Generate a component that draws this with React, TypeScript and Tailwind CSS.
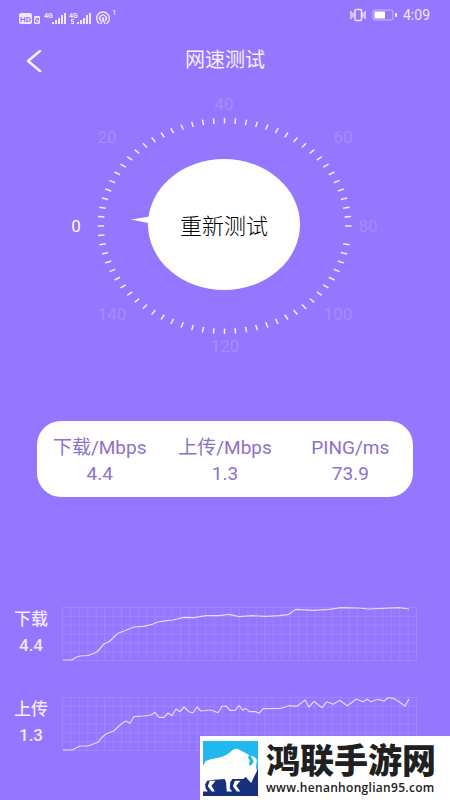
const TICKS = 72;
const MISSING_TICK = 37;

const dialLabels = [
  { text: '0', x: 11, y: 142, active: true },
  { text: '20', x: 42, y: 53 },
  { text: '40', x: 159, y: 20 },
  { text: '60', x: 278, y: 53 },
  { text: '80', x: 303, y: 142 },
  { text: '100', x: 273, y: 230 },
  { text: '120', x: 160, y: 262 },
  { text: '140', x: 47, y: 230 },
];

const results = [
  { label: '下载/Mbps', value: '4.4' },
  { label: '上传/Mbps', value: '1.3' },
  { label: 'PING/ms', value: '73.9' },
];

const charts = [
  {
    name: '下载',
    value: '4.4',
    points:
      '0,53 9,53 13,50.3 17,49 25,48.5 29,47 34,45 41,37 44,35.5 46,34.7 51,30 55,26.3 63,23.3 71,20 81,19.3 88,17.7 95,15 105,13.3 110,13 121,10.3 131,10.7 143,8.7 156,8.7 166,7.3 176,9.7 190,8.7 203,9.3 216,8.7 225,7.7 233,2.3 250,3.3 266,2.3 278,.7 295,1 306,2 336,.7 346,2',
  },
  {
    name: '上传',
    value: '1.3',
    points:
      '0,53 9,53 17,49 25,49 35,45.3 38,41.3 43,37 51,33.7 59,26.3 63,24 67,26.3 71,19.7 81,19 88,18 92,15.3 96,20.3 101,20.3 105,16 109,18.7 113,12 117,14.7 121,10 126,14.7 130,16 134,10 138,14 148,13 155,15.7 159,9.3 163,9 167,13.3 172,13.3 176,8.7 180,13.3 182,11.3 187,14.7 193,14.7 196,16.3 200,11.7 218,11.3 226,8.7 234,9.3 242,3 246,10 251,4.3 259,10.7 264,4.7 270,7.3 277,3.3 284,8.7 288,6.3 293,2 300,4.7 304,2.3 308,4.7 315,2.3 321,4 325,.7 330,1.3 336,4.7 342,9 346,2',
  },
];

function SignalIcons() {
  return (
    <svg width="104" height="24" viewBox="0 0 104 24" fill="#efe6ff" fontFamily="Roboto, sans-serif" aria-hidden="true">
      <rect x="2" y="10" width="13" height="11" rx="2" />
      <text x="8.500" y="18.500" fontSize="8" fontWeight="700" fill="#9576ff" textAnchor="middle">HD</text>
      <rect x="17" y="13" width="6" height="8" rx="1" />
      <path d="M18.500 15.500h3v1.500h-3v2h3" fill="none" stroke="#9576ff" />
      <text x="27" y="15" fontSize="7" fontWeight="700">4G</text>
      <path d="M35 19h2v2h-2zM38 17h2v4h-2zM41 15h2v6h-2zM44 12h2v9h-2zM47 10h2v11h-2z" />
      <text x="52" y="15" fontSize="7" fontWeight="700">4G</text>
      <path d="M54 16h3v1h-2v1h2v3h-3v-1h2v-1h-2zM60 19h2v2h-2zM63 17h2v4h-2zM66 15h2v6h-2zM69 12h2v9h-2zM72 10h2v11h-2z" />
      <g fill="none" stroke="#efe6ff" strokeWidth="1.400" strokeLinecap="round">
        <path d="M82 20.200a6.300 6.300 0 1 1 8 0" />
        <path d="M83.500 17.500a3.300 3.300 0 1 1 5 0" />
        <path d="M84 20.500l2-4 2 4" />
      </g>
      <circle cx="86" cy="15.500" r="1.300" />
      <text x="95" y="12" fontSize="8">1</text>
    </svg>
  );
}

function StatusBar() {
  return (
    <div className="flex h-[30px] items-center justify-between pl-[17px] pr-5 text-[#efe6ff]">
      <SignalIcons />
      <div className="flex items-center gap-1">
        <svg width="50" height="14" viewBox="0 0 50 14" fill="none" stroke="#efe6ff" aria-hidden="true">
          <path d="M2 3v8M4 4.500v5M14 4.500v5M16 3v8" strokeWidth="1.300" />
          <rect x="6" y="1.500" width="6.500" height="11" rx="1" strokeWidth="1.500" />
          <rect x="24" y="2" width="20" height="10" rx="2" strokeOpacity=".6" />
          <rect x="25.500" y="3.500" width="10.500" height="7" fill="#fff" stroke="none" />
          <path d="M47 5v4" strokeWidth="2" />
        </svg>
        <span className="text-sm">4:09</span>
      </div>
    </div>
  );
}

function Dial() {
  return (
    <div className="relative mx-auto w-[320px]">
      <svg viewBox="0 0 320 272" className="block w-full" fontFamily="Roboto, sans-serif">
        {Array.from({ length: TICKS }, (_, i) => {
          if (i === MISSING_TICK) return null;
          const a = Math.PI + (i * 2 * Math.PI) / TICKS;
          const c = Math.cos(a);
          const s = Math.sin(a);
          return (
            <line
              key={i}
              x1={159.5 + 120.5 * c}
              y1={136 + 102.5 * s}
              x2={159.5 + 127 * c}
              y2={136 + 108 * s}
              stroke="#f3ecff"
              strokeWidth="1.500"
            />
          );
        })}
        <path d="M66 129.500l22-3.500v8z" fill="#fff" />
        {dialLabels.map((l) => (
          <text key={l.text} x={l.x} y={l.y} fontSize="17" textAnchor="middle" fill={l.active ? '#fff' : '#a68cff'}>
            {l.text}
          </text>
        ))}
      </svg>
      <button className="absolute left-[83px] top-[69px] h-[131px] w-[152px] rounded-[50%] bg-white pt-1 text-[22px] font-light text-black">
        重新测试
      </button>
    </div>
  );
}

function SpeedChart({ name, value, points }: { name: string; value: string; points: string }) {
  return (
    <section className="flex items-start">
      <div className="w-[62px] shrink-0 text-center text-[17px] font-medium leading-[26px] text-[#f3e8ff]">
        <h2>{name}</h2>
        <p>{value}</p>
      </div>
      <svg viewBox="0 -1 356 56" preserveAspectRatio="none" className="h-14 min-w-0 flex-1" fill="none" aria-hidden="true">
        <g stroke="#a086ff" strokeWidth="1">
          {Array.from({ length: 43 }, (_, i) => (
            <path key={i} d={`M${0.5 + i * 8.43} 0V53.500`} />
          ))}
          {Array.from({ length: 7 }, (_, i) => (
            <path key={i} d={`M0 ${0.5 + i * 8.83}H355`} />
          ))}
        </g>
        <polyline points={points} transform="translate(1 0)" stroke="#eed8fb" strokeWidth="1.200" strokeLinejoin="round" />
      </svg>
    </section>
  );
}

function SiteBadge() {
  return (
    <a href="#" className="absolute bottom-0 right-0 flex h-[65px] w-[250px] items-center gap-2 bg-white pl-[3px]">
      <svg width="55" height="55" viewBox="12 16 162 162" aria-hidden="true">
        <path d="M12 16h162v162H12z" fill="#20b8ee" />
        <path d="M12 112h150l12-14v80H12z" fill="#182f7d" />
        <path
          d="M12 90l8-15q16-8 35-9 24-5 40-20 8-8 15-8 16 6 35 18l20 8 6 8-3 20 3 12-8 16-9 20-9-10-7-8-8 6H98l-6 10-1 18 7 9H82l-2-27-4-10-30 2-22 3-6 12 2 11 6 9H12z"
          fill="#fff"
        />
        <path d="M152 50q-7 8-7 16l5 8-3 10 4 6q9-5 10-15l-5-9q-5-4-4-16z" fill="#20b8ee" />
        <path d="M106 133h16l-12 15 12 17h-10l-12-16zM32 133h17l-12 15 10 17h-9l-12-16z" fill="#fff" />
      </svg>
      <div className="text-[#202020]">
        <p className="text-[34px] font-black leading-[38px]">鸿联手游网</p>
        <p className="whitespace-nowrap font-['Open_Sans',sans-serif] text-xs font-semibold tracking-wide">www.henanhonglian95.com</p>
      </div>
    </a>
  );
}

export default function App() {
  return (
    <main className="relative min-h-screen overflow-hidden bg-[#9576ff] pb-[49px] font-[Roboto,'Noto_Sans_CJK_SC',sans-serif]">
      <StatusBar />
      <header className="grid h-[60px] grid-cols-[1fr_auto_1fr] items-center px-6 text-[#f7f0ff]">
        <button aria-label="返回" className="justify-self-start">
          <svg width="18" height="24" viewBox="0 0 18 24" fill="none" stroke="currentColor" strokeWidth="2.500" strokeLinecap="round" strokeLinejoin="round">
            <path d="M16 3L4 13l12 10" />
          </svg>
        </button>
        <h1 className="text-xl">网速测试</h1>
      </header>

      <Dial />

      <div className="mx-[37px] mt-[59px] grid grid-cols-3 rounded-3xl bg-white pb-[10px] pt-[14px] text-center text-[19px] leading-[26px] text-[#8d72c9]">
        {results.map((r) => (
          <div key={r.label}>
            <p>{r.label}</p>
            <p>{r.value}</p>
          </div>
        ))}
      </div>

      <div className="mt-[109px] flex flex-col gap-[34px] pr-8">
        {charts.map((c) => (
          <SpeedChart key={c.name} {...c} />
        ))}
      </div>

      <SiteBadge />
    </main>
  );
}
